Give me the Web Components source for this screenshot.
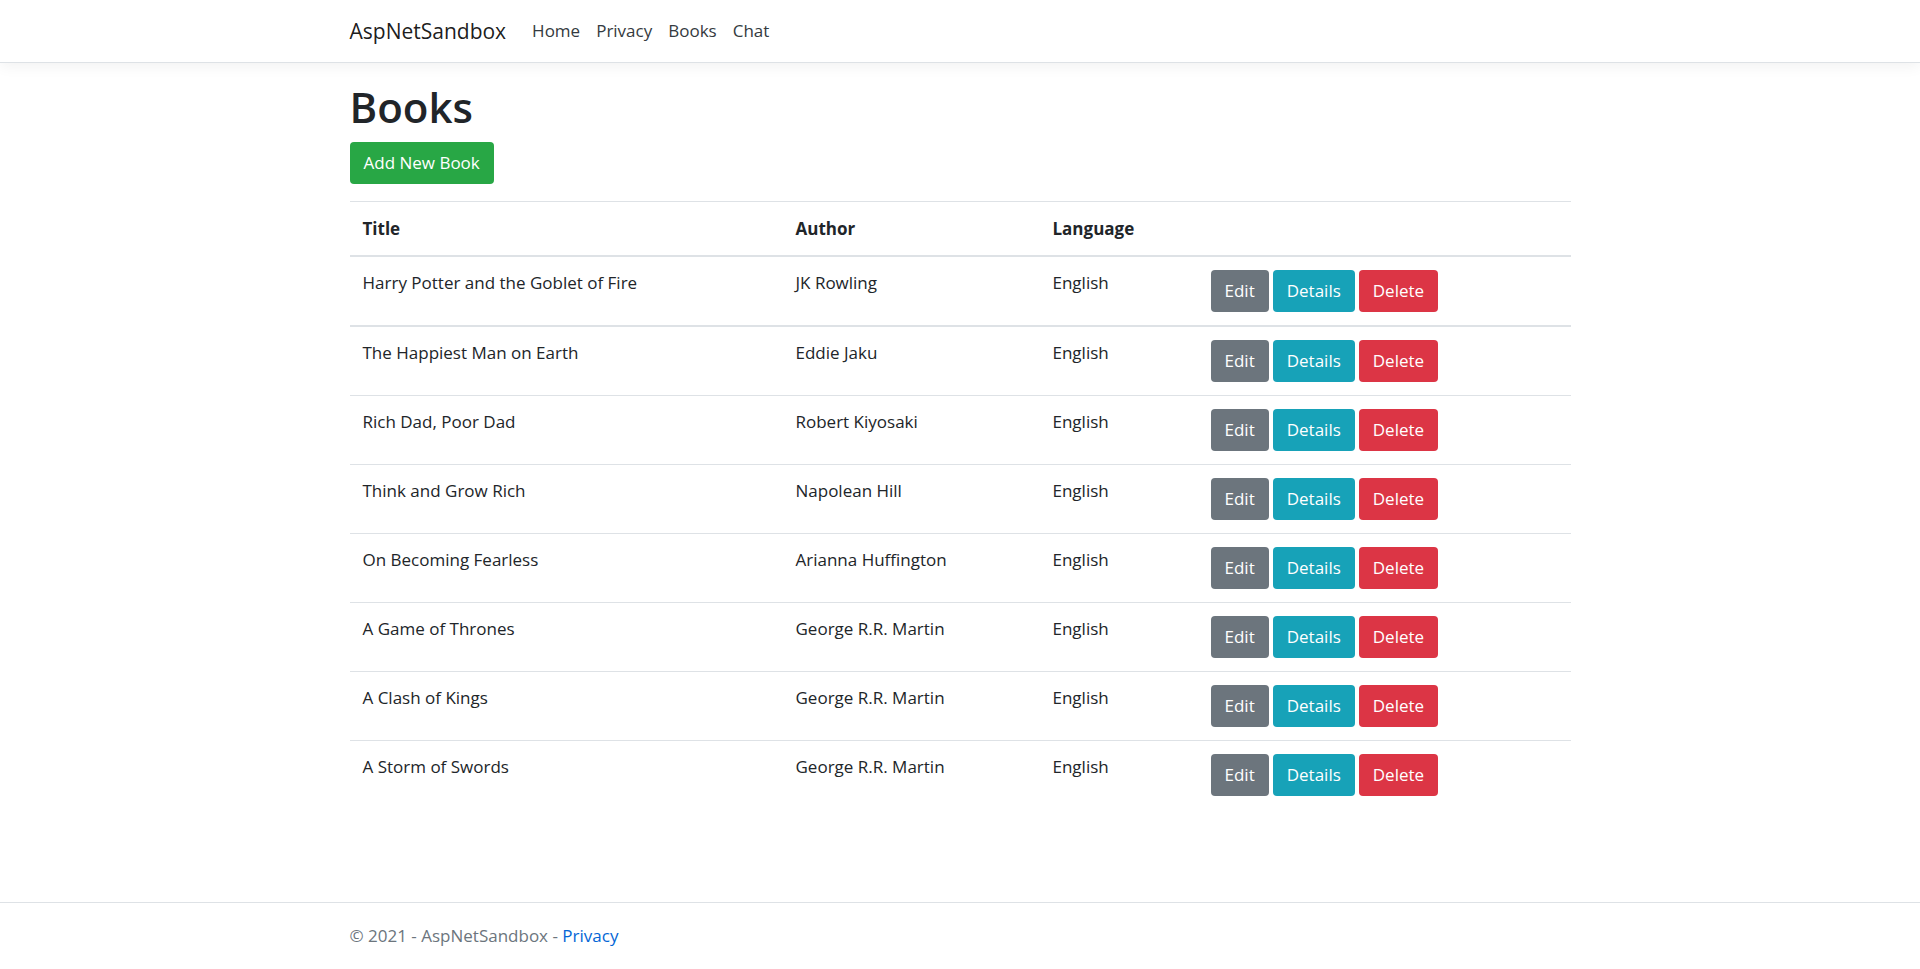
<!DOCTYPE html>
<html lang="en">
<head>
<meta charset="utf-8">
<meta name="viewport" content="width=device-width, initial-scale=1">
<title>Books - AspNetSandbox</title>
<style>
  body {
    margin: 0;
    font: 400 17px/26px "Open Sans", "Noto Sans", sans-serif;
    color: #212529;
    background: #fff;
  }
</style>
</head>
<body>
<sandbox-app></sandbox-app>

<template id="app-template">
  <style>
    :host { display: flex; flex-direction: column; min-height: 100vh; }
    main { flex: 1; padding: 18px 0 32px; }
    h1 { margin: 0 0 9px; font-size: 42px; line-height: 52px; font-weight: 600; }
    books-table { margin-top: 17px; }
  </style>
  <site-header></site-header>
  <main>
    <page-container>
      <h1>Books</h1>
      <action-button variant="success">Add New Book</action-button>
      <books-table></books-table>
    </page-container>
  </main>
  <site-footer></site-footer>
</template>

<template id="container-template">
  <style>
    :host { display: block; width: 100%; max-width: 1255px; box-sizing: border-box; margin: 0 auto; padding: 0 17px; }
  </style>
  <slot></slot>
</template>

<template id="header-template">
  <style>
    :host { display: block; border-bottom: 1px solid #dee2e6; box-shadow: 0 4px 13px rgba(0, 0, 0, .05); }
    nav { display: flex; align-items: center; height: 62px; }
    .brand { margin-right: 26px; font-size: 21px; line-height: 32px; color: rgba(0, 0, 0, .9); text-decoration: none; }
    ul { display: flex; gap: 16px; margin: 0; padding: 0; list-style: none; }
    li a { color: #343a40; text-decoration: none; }
  </style>
  <page-container>
    <nav aria-label="Main">
      <a class="brand" href="#">AspNetSandbox</a>
      <ul>
        <li><a href="#home">Home</a></li>
        <li><a href="#privacy">Privacy</a></li>
        <li><a href="#books">Books</a></li>
        <li><a href="#chat">Chat</a></li>
      </ul>
    </nav>
  </page-container>
</template>

<template id="button-template">
  <style>
    :host { display: block; width: fit-content; --fill: #28a745; }
    :host([variant="secondary"]) { --fill: #6c757d; }
    :host([variant="info"]) { --fill: #17a2b8; }
    :host([variant="danger"]) { --fill: #dc3545; }
    button {
      display: block;
      height: 42px;
      padding: 0 14px;
      border: 0;
      border-radius: 4px;
      background: var(--fill);
      color: #fff;
      font: inherit;
      white-space: nowrap;
      cursor: pointer;
    }
  </style>
  <button type="button"><slot></slot></button>
</template>

<template id="table-template">
  <style>
    :host { display: block; }
    table { width: 100%; table-layout: fixed; border-collapse: separate; border-spacing: 0; }
    .author { width: 257px; }
    .language { width: 158px; }
    .actions { width: 373px; }
    th, td { padding: 13px; text-align: left; vertical-align: top; }
    th { border-top: 1px solid #dee2e6; border-bottom: 2px solid #dee2e6; font-weight: 700; line-height: 27px; }
    td { border-bottom: 1px solid #dee2e6; }
    tr:first-child td { border-bottom-width: 2px; }
    tr:last-child td { border-bottom: 0; }
    .buttons { display: flex; gap: 4px; }
  </style>
  <table>
    <colgroup><col><col class="author"><col class="language"><col class="actions"></colgroup>
    <thead>
      <tr><th scope="col">Title</th><th scope="col">Author</th><th scope="col">Language</th><th></th></tr>
    </thead>
    <tbody></tbody>
  </table>
</template>

<template id="row-template">
  <tr>
    <td></td><td></td><td></td>
    <td>
      <div class="buttons">
        <action-button variant="secondary">Edit</action-button>
        <action-button variant="info">Details</action-button>
        <action-button variant="danger">Delete</action-button>
      </div>
    </td>
  </tr>
</template>

<template id="footer-template">
  <style>
    :host { display: block; border-top: 1px solid #dee2e6; color: #6c757d; line-height: 66px; }
    a { color: #0366d6; text-decoration: none; }
  </style>
  <page-container>© 2021 - AspNetSandbox - <a href="#privacy">Privacy</a></page-container>
</template>

<script>
  class TemplateElement extends HTMLElement {
    constructor() {
      super();
      const template = document.getElementById(this.constructor.template);
      this.attachShadow({ mode: "open" }).append(document.importNode(template.content, true));
    }
  }

  customElements.define("page-container", class extends TemplateElement {
    static template = "container-template";
  });
  customElements.define("action-button", class extends TemplateElement {
    static template = "button-template";
  });
  customElements.define("site-header", class extends TemplateElement {
    static template = "header-template";
  });
  customElements.define("site-footer", class extends TemplateElement {
    static template = "footer-template";
  });

  const BOOKS = [
    ["Harry Potter and the Goblet of Fire", "JK Rowling", "English"],
    ["The Happiest Man on Earth", "Eddie Jaku", "English"],
    ["Rich Dad, Poor Dad", "Robert Kiyosaki", "English"],
    ["Think and Grow Rich", "Napolean Hill", "English"],
    ["On Becoming Fearless", "Arianna Huffington", "English"],
    ["A Game of Thrones", "George R.R. Martin", "English"],
    ["A Clash of Kings", "George R.R. Martin", "English"],
    ["A Storm of Swords", "George R.R. Martin", "English"]
  ];

  customElements.define("books-table", class extends TemplateElement {
    static template = "table-template";
    constructor() {
      super();
      const body = this.shadowRoot.querySelector("tbody");
      const rowTemplate = document.getElementById("row-template");
      for (const book of BOOKS) {
        const row = document.importNode(rowTemplate.content, true);
        const cells = row.querySelectorAll("td");
        book.forEach((text, i) => { cells[i].textContent = text; });
        body.append(row);
      }
    }
  });

  customElements.define("sandbox-app", class extends TemplateElement {
    static template = "app-template";
  });
</script>
</body>
</html>
